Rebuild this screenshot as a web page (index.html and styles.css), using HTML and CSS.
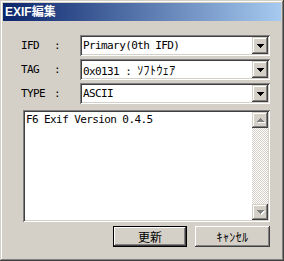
FILE: index.html
```html
<!DOCTYPE html>
<html lang="ja">
<head>
  <meta charset="UTF-8">
  <title>EXIF編集</title>
  <link rel="stylesheet" href="styles.css">
</head>
<body>
  <div class="window">
    <div class="titlebar">EXIF編集</div>
    <div class="content">
      <div class="fields">
        <span class="label">IFD</span>
        <span class="colon">:</span>
        <div class="combo">
          <span class="combo-text">Primary(0th IFD)</span>
          <span class="drop"><svg width="7" height="4" viewBox="0 0 7 4"><path d="M0 0h7L3.5 4z" fill="#000"/></svg></span>
        </div>

        <span class="label">TAG</span>
        <span class="colon">:</span>
        <div class="combo">
          <span class="combo-text">0x0131 : <span class="kana">ｿﾌﾄｳｪｱ</span></span>
          <span class="drop"><svg width="7" height="4" viewBox="0 0 7 4"><path d="M0 0h7L3.5 4z" fill="#000"/></svg></span>
        </div>

        <span class="label">TYPE</span>
        <span class="colon">:</span>
        <div class="combo">
          <span class="combo-text">ASCII</span>
          <span class="drop"><svg width="7" height="4" viewBox="0 0 7 4"><path d="M0 0h7L3.5 4z" fill="#000"/></svg></span>
        </div>
      </div>

      <div class="memo">
        <div class="memo-text">F6 Exif Version 0.4.5</div>
        <div class="scrollbar">
          <span class="sb-btn"><svg width="7" height="4" viewBox="0 0 7 4"><path d="M3.5 0L7 4H0z" fill="#808080"/></svg></span>
          <span class="sb-track"></span>
          <span class="sb-btn"><svg width="7" height="4" viewBox="0 0 7 4"><path d="M0 0h7L3.5 4z" fill="#808080"/></svg></span>
        </div>
      </div>

      <div class="buttons">
        <button class="btn default">更新</button>
        <button class="btn"><span class="kana">ｷｬﾝｾﾙ</span></button>
      </div>
    </div>
  </div>
</body>
</html>
```

FILE: styles.css
```css
body {
  margin: 0;
  padding: 0;
  background: #D4D0C8;
}
.window {
  width: 284px;
  height: 261px;
  box-sizing: border-box;
  padding: 3px;
  background: #D4D0C8;
  box-shadow: inset -1px -1px #404040, inset 1px 1px #D4D0C8,
              inset -2px -2px #808080, inset 2px 2px #fff;
}
.titlebar {
  height: 18px;
  line-height: 18px;
  padding-left: 2px;
  background: linear-gradient(to right, #0A246A, #A6CAF0);
  color: #fff;
  font-family: "Liberation Sans", "Noto Sans CJK JP", sans-serif;
  font-weight: bold;
  font-size: 12px;
}
.content {
  padding: 14px 0 0 18px;
  font-family: "DejaVu Sans Mono", "Noto Sans CJK JP", monospace;
  font-size: 11px;
  letter-spacing: -0.6px;
  color: #000;
}
.kana {
  font-family: "Noto Sans CJK JP", sans-serif;
  font-size: 12px;
  letter-spacing: 0.4px;
}
.fields {
  display: grid;
  grid-template-columns: 33px 26px 190px;
  grid-auto-rows: 21px;
  row-gap: 3px;
  align-items: center;
}
.combo {
  height: 21px;
  box-sizing: border-box;
  display: flex;
  align-items: center;
  justify-content: space-between;
  padding: 2px;
  background: #fff;
  box-shadow: inset 1px 1px #808080, inset -1px -1px #fff,
              inset 2px 2px #404040, inset -2px -2px #D4D0C8;
}
.combo-text {
  padding-left: 1px;
}
.drop {
  width: 16px;
  height: 17px;
  display: flex;
  align-items: center;
  justify-content: center;
  background: #D4D0C8;
  box-shadow: inset -1px -1px #404040, inset 1px 1px #D4D0C8,
              inset -2px -2px #808080, inset 2px 2px #fff;
}
.drop svg, .sb-btn svg {
  shape-rendering: crispEdges;
  display: block;
}
.memo {
  margin: 6px 0 0 2px;
  width: 247px;
  height: 112px;
  box-sizing: border-box;
  padding: 2px;
  display: flex;
  background: #fff;
  box-shadow: inset 1px 1px #808080, inset -1px -1px #fff,
              inset 2px 2px #404040, inset -2px -2px #D4D0C8;
}
.memo-text {
  flex: 1;
  padding: 1px 0 0 1px;
}
.scrollbar {
  width: 16px;
  display: flex;
  flex-direction: column;
}
.sb-btn {
  height: 16px;
  display: flex;
  align-items: center;
  justify-content: center;
  background: #D4D0C8;
  box-shadow: inset -1px -1px #404040, inset 1px 1px #D4D0C8,
              inset -2px -2px #808080, inset 2px 2px #fff;
}
.sb-btn svg {
  filter: drop-shadow(1px 1px 0 #fff);
}
.sb-track {
  flex: 1;
  background-image: conic-gradient(#fff 25%, #D4D0C8 0 50%, #fff 0 75%, #D4D0C8 0);
  background-size: 2px 2px;
}
.buttons {
  display: flex;
  justify-content: flex-end;
  gap: 8px;
  width: 249px;
  margin-top: 4px;
}
.btn {
  width: 75px;
  height: 21px;
  padding: 0;
  border: none;
  background: #D4D0C8;
  font-family: "Noto Sans CJK JP", sans-serif;
  font-size: 12px;
  color: #000;
  box-shadow: inset -1px -1px #404040, inset 1px 1px #fff,
              inset -2px -2px #808080, inset 2px 2px #D4D0C8;
}
.btn.default {
  width: 74px;
  box-shadow: inset 0 0 0 1px #000, inset -2px -2px #404040,
              inset 2px 2px #fff, inset -3px -3px #808080;
}
```
